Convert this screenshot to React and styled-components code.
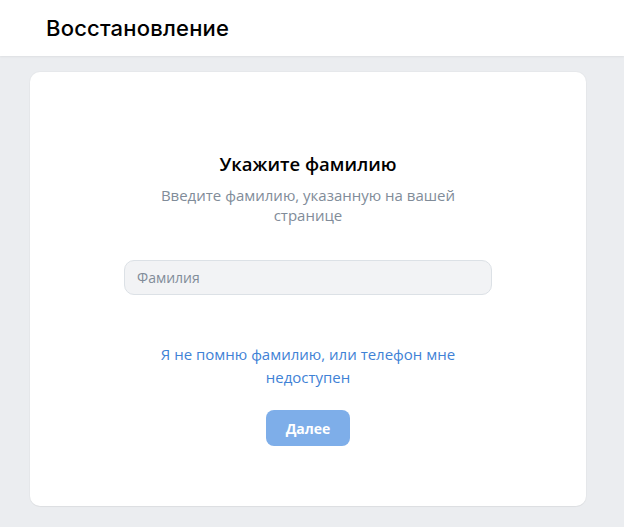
import React from 'react'
import styled, { createGlobalStyle } from 'styled-components'

const Global = createGlobalStyle`
    html, body {
        margin: 0;
        padding: 0;
        background: #ebedf0;
        font-family: "Open Sans", "Noto Sans", sans-serif;
    }
`

const Page = styled.div`
    min-height: 527px;
    display: flex;
    flex-direction: column;
`

const Header = styled.header`
    height: 56px;
    background: #fff;
    box-shadow: 0 1px 2px rgba(0, 0, 0, 0.06);
    display: flex;
    align-items: center;
    padding-left: 46px;
    box-sizing: border-box;
`

const HeaderTitle = styled.h1`
    margin: 0;
    font-family: Inter, "Open Sans", sans-serif;
    font-size: 22px;
    font-weight: 500;
    color: #000;
    letter-spacing: 0.2px;
`

const Main = styled.main`
    padding: 16px 38px 21px 30px;
`

const Card = styled.section`
    background: #fff;
    border-radius: 10px;
    box-shadow: 0 0 0 1px rgba(0, 0, 0, 0.02), 0 1px 1px rgba(0, 0, 0, 0.04);
    height: 434px;
    box-sizing: border-box;
    padding-top: 80px;
    display: flex;
    flex-direction: column;
    align-items: center;
`

const Title = styled.h2`
    margin: 0;
    font-size: 18.5px;
    font-weight: 600;
    color: #000;
    line-height: 24px;
`

const Subtitle = styled.p`
    margin: 9px 0 0;
    width: 330px;
    text-align: center;
    font-size: 15px;
    line-height: 20px;
    color: #818c99;
`

const Input = styled.input`
    margin-top: 35px;
    width: 368px;
    height: 35px;
    box-sizing: border-box;
    border: 1px solid #dce1e6;
    border-radius: 10px;
    background: #f2f3f5;
    padding: 0 12px;
    font-family: inherit;
    font-size: 14px;
    color: #000;
    outline: none;
    &::placeholder {
        color: #818c99;
    }
`

const Link = styled.a`
    margin-top: 48px;
    width: 340px;
    text-align: center;
    font-size: 15px;
    line-height: 23px;
    color: #3f82d6;
    text-decoration: none;
    cursor: pointer;
`

const Button = styled.button`
    margin-top: 21px;
    width: 84px;
    height: 36px;
    border: none;
    border-radius: 8px;
    background: ${({disabled}) => disabled ? `#7eaee9` : `#4986cc`};
    color: #fff;
    font-family: inherit;
    font-size: 14px;
    font-weight: 700;
`

export default function App() {
    return (
        <Page>
            <Global />
            <Header>
                <HeaderTitle>Восстановление</HeaderTitle>
            </Header>
            <Main>
                <Card>
                    <Title>Укажите фамилию</Title>
                    <Subtitle>Введите фамилию, указанную на вашей странице</Subtitle>
                    <Input placeholder="Фамилия" />
                    <Link>Я не помню фамилию, или телефон мне недоступен</Link>
                    <Button disabled>Далее</Button>
                </Card>
            </Main>
        </Page>
    )
}
